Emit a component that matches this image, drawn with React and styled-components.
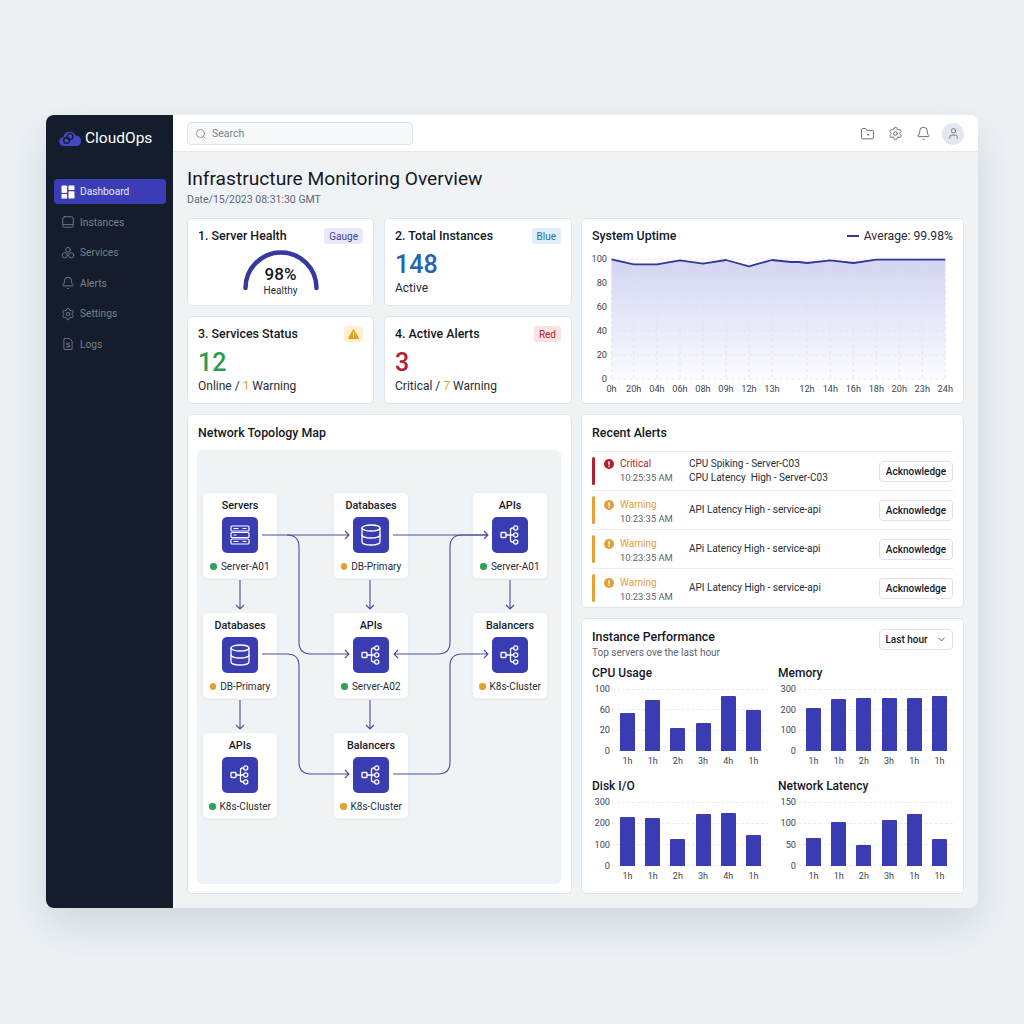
import React from 'react'
import styled, { createGlobalStyle } from 'styled-components'
import { Bell, ChevronDown, Database, Search, Settings, User } from 'lucide-react'

const GlobalStyle = createGlobalStyle`
  html, body {
    margin: 0;
    padding: 0;
    background: #edf1f4;
    font-family: Roboto, "Liberation Sans", sans-serif;
    color: #14181f;
  }
  * { box-sizing: border-box; }
`

const Page = styled.div`
  width: 1024px;
  height: 1024px;
  padding: 115px 46px 0;
`

const Shell = styled.div`
  display: flex;
  width: 932px;
  height: 793px;
  border-radius: 8px;
  overflow: hidden;
  background: #f0f3f6;
  box-shadow: 0 18px 40px rgba(40, 60, 90, 0.14);
`

const Sidebar = styled.aside`
  flex: 0 0 127px;
  background: #141d2b;
  padding: 0 7px 0 8px;
`

const Brand = styled.div`
  display: flex;
  align-items: center;
  gap: 3px;
  height: 46px;
  margin-bottom: 18px;
  padding-left: 5px;
  color: #fff;
  font-size: 15.5px;
  font-weight: 400;
`

const Nav = styled.nav`
  display: flex;
  flex-direction: column;
  gap: 5.5px;
`

const NavItem = styled.div`
  display: flex;
  align-items: center;
  gap: 5px;
  height: 25px;
  padding-left: 7px;
  border-radius: 4px;
  font-size: 10.2px;
  background: ${p => (p.$active ? '#3a3db5' : 'transparent')};
  color: ${p => (p.$active ? '#e8eaff' : '#76818f')};
  svg { flex: none; }
`

const Main = styled.div`
  flex: 1;
  display: flex;
  flex-direction: column;
  min-width: 0;
`

const Header = styled.header`
  display: flex;
  align-items: center;
  justify-content: space-between;
  height: 39px;
  padding: 1px 14px 0;
  background: #fff;
  border-bottom: 1px solid #e6eaee;
`

const SearchBox = styled.div`
  display: flex;
  align-items: center;
  gap: 5px;
  width: 226px;
  height: 23px;
  padding-left: 7px;
  background: #f6f8f9;
  border: 1px solid #e2e6ea;
  border-radius: 4px;
  color: #7b838d;
  font-size: 10.5px;
`

const HeaderIcons = styled.div`
  display: flex;
  align-items: center;
  gap: 13px;
  color: #5c6672;
`

const Avatar = styled.div`
  display: flex;
  align-items: center;
  justify-content: center;
  width: 22px;
  height: 22px;
  margin-left: -2px;
  border-radius: 50%;
  background: #e3e8ee;
`

const Content = styled.main`
  flex: 1;
  padding: 15px 14px 14px;
`

const PageTitle = styled.h1`
  margin: 0;
  font-size: 19.2px;
  line-height: 24px;
  font-weight: 450;
  color: #14181f;
`

const PageDate = styled.div`
  margin-top: 2px;
  font-size: 10.5px;
  line-height: 14px;
  color: #5d6672;
`

const DashGrid = styled.div`
  display: grid;
  grid-template-columns: 385px 383px;
  grid-template-rows: 186px 480px;
  gap: 10px 9px;
  margin-top: 11px;
`

const StatGrid = styled.div`
  display: grid;
  grid-template-columns: 187px 188px;
  grid-template-rows: 88px 88px;
  gap: 10px;
`

const Card = styled.section`
  position: relative;
  background: #fff;
  border: 1px solid #dfe5ea;
  border-radius: 5px;
  padding: 9px 10px;
  min-width: 0;
`

const PanelCard = styled(Card)`
  padding-top: 10px;
`

const CardHead = styled.div`
  display: flex;
  align-items: center;
  justify-content: space-between;
  height: 16px;
`

const CardTitle = styled.h2`
  margin: 0;
  font-size: 12.4px;
  line-height: 16px;
  font-weight: 460;
  color: #14181f;
`

const Pill = styled.span`
  display: flex;
  align-items: center;
  height: 16px;
  padding: 0 ${p => (p.$tight ? 4 : 5)}px;
  border-radius: 3px;
  font-size: 10px;
  background: ${p => p.$bg};
  color: ${p => p.$fg};
`

const StatValue = styled.div`
  margin-top: 6px;
  font-size: 25px;
  line-height: 30px;
  font-weight: 460;
  color: ${p => p.$color};
`

const StatNote = styled.div`
  margin-top: 0;
  font-size: 12px;
  line-height: 16px;
  color: #262c35;
`

const Amber = styled.span`
  color: #e3a23c;
`

const Gauge = styled.div`
  position: relative;
  width: 80px;
  height: 52px;
  margin: 5px auto 0;
`

const GaugeValue = styled.div`
  position: absolute;
  left: 0;
  right: 0;
  top: 15px;
  text-align: center;
  font-size: 17px;
  line-height: 20px;
  font-weight: 460;
`

const GaugeNote = styled.div`
  position: absolute;
  left: 0;
  right: 0;
  top: 35px;
  text-align: center;
  font-size: 10px;
  line-height: 13px;
  color: #262c35;
`

const Legend = styled.div`
  display: flex;
  align-items: center;
  gap: 5px;
  font-size: 12.2px;
  color: #262c35;
`

const LegendDash = styled.span`
  width: 12px;
  height: 2.5px;
  background: #33379c;
`

const UptimeSvg = styled.svg`
  display: block;
  margin-top: 7px;
  font-family: Roboto, "Liberation Sans", sans-serif;
  font-size: 9.2px;
  fill: #3d4550;
`

const TopologyCanvas = styled.div`
  position: relative;
  height: 434px;
  margin: 9px 0 0 -1px;
  background: #f0f3f5;
  border-radius: 5px;
`

const NodeCard = styled.div`
  position: absolute;
  left: ${p => p.$x}px;
  top: ${p => p.$y}px;
  display: flex;
  flex-direction: column;
  align-items: center;
  width: 76px;
  height: 87px;
  padding-top: 6px;
  background: #fff;
  border: 1px solid #edf0f3;
  border-radius: 5px;
  box-shadow: 0 1px 2px rgba(40, 60, 90, 0.05);
`

const NodeTitle = styled.div`
  font-size: 10.8px;
  line-height: 13px;
  font-weight: 460;
  color: #14181f;
`

const NodeIcon = styled.div`
  display: flex;
  align-items: center;
  justify-content: center;
  width: 36px;
  height: 36px;
  margin-top: 5px;
  border-radius: 5px;
  background: #3a3cb2;
  color: #fff;
`

const NodeLabel = styled.div`
  display: flex;
  align-items: center;
  gap: 4px;
  margin-top: 7px;
  font-size: 10px;
  line-height: 13px;
  color: #262c35;
  white-space: nowrap;
`

const Dot = styled.span`
  width: 6.5px;
  height: 6.5px;
  border-radius: 50%;
  background: ${p => (p.$warn ? '#e3a030' : '#2ea352')};
`

const Links = styled.svg`
  position: absolute;
  inset: 0;
  pointer-events: none;
`

const RightColumn = styled.div`
  display: grid;
  grid-template-rows: 194px 276px;
  gap: 10px;
`

const AlertList = styled.div`
  margin-top: 10px;
`

const AlertRow = styled.div`
  display: grid;
  grid-template-columns: 3px 94px 1fr auto;
  align-items: center;
  height: 39px;
  border-top: 1px solid #e8ebef;
`

const AlertBar = styled.span`
  width: 3px;
  height: 28px;
  border-radius: 2px;
  background: ${p => p.$color};
`

const Severity = styled.div`
  padding-left: 9px;
  margin-top: ${p => (p.$low ? 4 : 0)}px;
`

const SeverityHead = styled.div`
  display: flex;
  align-items: center;
  gap: 6px;
  font-size: 10px;
  line-height: 14px;
  color: ${p => p.$color};
`

const AlertTime = styled.div`
  margin-left: 16px;
  font-size: 9.4px;
  line-height: 14px;
  color: #59626d;
`

const AlertMessage = styled.div`
  font-size: 10px;
  line-height: 14px;
  color: #262c35;
  white-space: pre;
`

const OutlineButton = styled.button`
  display: flex;
  align-items: center;
  justify-content: center;
  gap: 8px;
  width: 74px;
  height: 21px;
  padding: 0;
  background: #fff;
  border: 1px solid #dfe3e8;
  border-radius: 4px;
  font-family: inherit;
  font-size: 10px;
  font-weight: 460;
  color: #14181f;
`

const PerfHead = styled.div`
  display: flex;
  align-items: flex-start;
  justify-content: space-between;
`

const PerfSub = styled.div`
  margin-top: 1px;
  font-size: 10px;
  line-height: 14px;
  color: #5d6672;
`

const ChartGrid = styled.div`
  display: grid;
  grid-template-columns: 177px 175px;
  column-gap: 9px;
  margin-top: 5px;
`

const ChartBlock = styled.div`
  height: 113px;
`

const ChartTitle = styled.div`
  font-size: 12px;
  line-height: 16px;
  font-weight: 460;
  color: #14181f;
`

const ChartBody = styled.div`
  display: flex;
  height: ${p => p.$h}px;
  margin-top: 8px;
`

const YAxis = styled.div`
  display: flex;
  flex-direction: column;
  justify-content: space-between;
  flex: 0 0 18px;
  margin-right: 2px;
  font-size: 9.2px;
  line-height: 0;
  text-align: right;
  color: #3d4550;
`

const Plot = styled.div`
  position: relative;
  flex: 1;
`

const GridLines = styled.div`
  position: absolute;
  inset: 0;
  display: flex;
  flex-direction: column;
  justify-content: space-between;
`

const GridLine = styled.span`
  height: 0;
  border-top: 1px dashed #e9ecf3;
`

const Bars = styled.div`
  position: relative;
  display: grid;
  grid-template-columns: repeat(6, 15px);
  column-gap: 10.2px;
  align-items: end;
  height: 100%;
  padding-left: 8px;
`

const Bar = styled.span`
  display: block;
  border-radius: 1px 1px 0 0;
  background: #3a3cb4;
`

const XAxis = styled.div`
  display: grid;
  grid-template-columns: repeat(6, 15px);
  column-gap: 10.2px;
  margin: 4px 0 0 28px;
  font-size: 9px;
  line-height: 12px;
  text-align: center;
  color: #3d4550;
`

const CloudLogo = () => (
  <svg width="23" height="17" viewBox="0 0 23 17">
    <path d="M5 16a4.5 4.5 0 0 1-.6-9A6.5 6.5 0 0 1 16.6 5.4 5.4 5.4 0 0 1 18 16z" fill="#4548c4" />
    <g fill="none" stroke="#141d2b" strokeWidth="1.3">
      <circle cx="7.6" cy="10.4" r="2.9" />
      <circle cx="11" cy="6.6" r="2.9" />
    </g>
  </svg>
)

const DashIcon = () => (
  <svg width="14" height="14" viewBox="0 0 14 14" fill="#fff">
    <rect x="0.5" y="0.5" width="5.6" height="7.4" rx="0.6" />
    <rect x="7.5" y="0.5" width="6" height="4.6" rx="0.6" />
    <rect x="0.5" y="9.1" width="5.6" height="4.4" rx="0.6" />
    <rect x="7.5" y="6.3" width="6" height="7.2" rx="0.6" />
  </svg>
)

const line = { fill: 'none', stroke: 'currentColor', strokeLinecap: 'round', strokeLinejoin: 'round' }

const InstancesIcon = () => (
  <svg width="14" height="14" viewBox="0 0 24 24" {...line} strokeWidth="1.5">
    <rect x="3" y="3" width="18" height="18" rx="3" />
    <path d="M3 16.5h18" />
  </svg>
)

const ServicesIcon = () => (
  <svg width="14" height="14" viewBox="0 0 24 24" {...line} strokeWidth="1.5">
    <circle cx="12" cy="6.5" r="4" />
    <circle cx="6.5" cy="16" r="4.5" />
    <circle cx="17.5" cy="16" r="4.5" />
  </svg>
)

const LogsIcon = () => (
  <svg width="14" height="14" viewBox="0 0 24 24" {...line} strokeWidth="1.5">
    <path d="M6 2.5h8.5L19 7v13a1.5 1.5 0 0 1-1.5 1.5h-11A1.5 1.5 0 0 1 5 20V4a1.5 1.5 0 0 1 1-1.5z" />
    <path d="M14.5 10.5h-4.5v3h4.5v3.5H9.5" />
  </svg>
)

const FolderIcon = () => (
  <svg width="15" height="15" viewBox="0 0 24 24" {...line} strokeWidth="1.5">
    <path d="M2.5 5.5A1.5 1.5 0 0 1 4 4h5l2 3h9a1.5 1.5 0 0 1 1.5 1.5V19a1.5 1.5 0 0 1-1.5 1.5H4A1.5 1.5 0 0 1 2.5 19z" />
    <circle cx="13" cy="14" r="0.8" />
  </svg>
)

const ServerIcon = () => (
  <svg width="24" height="24" viewBox="0 0 24 24" {...line} strokeWidth="1.2">
    <rect x="3" y="3" width="18" height="5" rx="1" />
    <rect x="3" y="9.5" width="18" height="5" rx="1" />
    <rect x="3" y="16" width="18" height="5" rx="1" />
    <path d="M6 5.5h4M15 5.5h3M6 12h2M6 18.5h4M15 18.5h3" />
  </svg>
)

const NetworkIcon = () => (
  <svg width="24" height="24" viewBox="0 0 24 24" {...line} strokeWidth="1.3">
    <rect x="3" y="9.5" width="5" height="5" rx="0.8" />
    <path d="M8 12h7.5M15.5 5h-1a2 2 0 0 0-2 2v10a2 2 0 0 0 2 2h1" />
    <circle cx="17.7" cy="5" r="2.1" />
    <circle cx="17.7" cy="12" r="2.1" />
    <circle cx="17.7" cy="19" r="2.1" />
  </svg>
)

const AlertDot = ({ color }) => (
  <svg width="10" height="10" viewBox="0 0 10 10">
    <circle cx="5" cy="5" r="5" fill={color} />
    <rect x="4.3" y="2.2" width="1.4" height="3.6" rx="0.6" fill="#fff" />
    <circle cx="5" cy="7.2" r="0.8" fill="#fff" />
  </svg>
)

const WarnTriangle = () => (
  <svg width="11" height="10" viewBox="0 0 11 10">
    <path d="M5.5 0.5 10.6 9.5H0.4z" fill="#e2a11f" stroke="#e2a11f" strokeLinejoin="round" />
    <rect x="5" y="3.2" width="1" height="3.2" fill="#fff" />
    <rect x="5" y="7.1" width="1" height="1" fill="#fff" />
  </svg>
)

const navItems = [
  { label: 'Dashboard', icon: <DashIcon />, active: true },
  { label: 'Instances', icon: <InstancesIcon /> },
  { label: 'Services', icon: <ServicesIcon /> },
  { label: 'Alerts', icon: <Bell size={14} strokeWidth={1.5} /> },
  { label: 'Settings', icon: <Settings size={14} strokeWidth={1.5} /> },
  { label: 'Logs', icon: <LogsIcon /> }
]

const nodes = [
  { x: 5, y: 42, title: 'Servers', icon: 'server', label: 'Server-A01' },
  { x: 136, y: 42, title: 'Databases', icon: 'db', label: 'DB-Primary', warn: true },
  { x: 275, y: 42, title: 'APIs', icon: 'net', label: 'Server-A01' },
  { x: 5, y: 162, title: 'Databases', icon: 'db', label: 'DB-Primary', warn: true },
  { x: 136, y: 162, title: 'APIs', icon: 'net', label: 'Server-A02' },
  { x: 275, y: 162, title: 'Balancers', icon: 'net', label: 'K8s-Cluster', warn: true },
  { x: 5, y: 282, title: 'APIs', icon: 'net', label: 'K8s-Cluster' },
  { x: 136, y: 282, title: 'Balancers', icon: 'net', label: 'K8s-Cluster', warn: true }
]

const nodeIcons = {
  server: <ServerIcon />,
  db: <Database size={24} strokeWidth={1.3} />,
  net: <NetworkIcon />
}

const linkPaths = [
  'M65 85H152M148 81l4 4-4 4',
  'M90 85Q102 85 102 97V192Q102 204 114 204H152M148 200l4 4-4 4',
  'M196 85H291M287 81l4 4-4 4',
  'M291 85H265Q253 85 253 97V192Q253 204 241 204H197M201 200l-4 4 4 4',
  'M196 324H241Q253 324 253 312V216Q253 204 265 204H291M287 200l4 4-4 4',
  'M65 204H90Q102 204 102 216V312Q102 324 114 324H152M148 320l4 4-4 4',
  'M43 130V159M39 155l4 4 4-4',
  'M173 130V159M169 155l4 4 4-4',
  'M313 130V159M309 155l4 4 4-4',
  'M43 250V279M39 275l4 4 4-4',
  'M173 250V279M169 275l4 4 4-4'
]

const uptimeLabels = [
  ['0h', 611.5], ['20h', 633.7], ['04h', 657], ['06h', 680], ['08h', 703], ['09h', 726], ['12h', 749], ['13h', 772],
  ['12h', 807], ['14h', 830.4], ['16h', 853.4], ['18h', 876.4], ['20h', 899.3], ['23h', 922.3], ['24h', 945.3]
]

const uptimePoints = [
  [611.5, 258.3], [633.7, 263.3], [657, 263.3], [680, 259.3], [703, 262.7], [726, 259], [749, 265.3], [772, 259],
  [791, 261], [799, 261], [807, 262], [830.4, 259.3], [853.4, 262], [876.4, 258.7], [945.3, 258.7]
]

const uptimeLine = uptimePoints.map(([x, y]) => `${x - 592},${y - 250}`).join(' ')
const uptimeArea = `19.5,128 ${uptimeLine} 353.3,128`

const UptimeChart = () => (
  <UptimeSvg width="361" height="148" viewBox="0 0 361 148">
    <defs>
      <linearGradient id="uptimeFill" x1="0" y1="0" x2="0" y2="1">
        <stop offset="0" stopColor="#d3d5f2" />
        <stop offset="1" stopColor="#fbfbff" />
      </linearGradient>
    </defs>
    <polygon points={uptimeArea} fill="url(#uptimeFill)" />
    {[8, 32, 56, 80, 104, 128].map(y => (
      <line key={y} x1="19.5" x2="353.3" y1={y} y2={y} stroke="#dfe1ec" strokeWidth="0.8" strokeDasharray="3 3" />
    ))}
    {uptimeLabels.map(([, x], i) => (
      <line key={i} x1={x - 592} x2={x - 592} y1="10" y2="128" stroke="#dfe1ec" strokeWidth="0.8" strokeDasharray="3 3" />
    ))}
    <polyline points={uptimeLine} fill="none" stroke="#33379c" strokeWidth="1.8" strokeLinejoin="round" />
    {[100, 80, 60, 40, 20, 0].map((v, i) => (
      <text key={v} x="15" y={11 + i * 24} textAnchor="end">{v}</text>
    ))}
    {uptimeLabels.map(([label, x], i) => (
      <text key={i} x={x - 592} y="141" textAnchor="middle">{label}</text>
    ))}
  </UptimeSvg>
)

const alerts = [
  { level: 'Critical', color: '#b3202e', barColor: '#b3202e', time: '10:25:35 AM', lines: ['CPU Spiking - Server-C03', 'CPU Latency  High - Server-C03'] },
  { level: 'Warning', color: '#e2a03a', barColor: '#e89f35', time: '10:23:35 AM', lines: ['API Latency High - service-api'], low: true },
  { level: 'Warning', color: '#e2a03a', barColor: '#e89f35', time: '10:23:35 AM', lines: ['APi Latency High - service-api'], low: true },
  { level: 'Warning', color: '#e2a03a', barColor: '#e89f35', time: '10:23:35 AM', lines: ['API Latency High - service-api'], low: true }
]

const charts = [
  { title: 'CPU Usage', h: 62, y: [100, 60, 20, 0], bars: [38, 51, 23, 28, 55, 41], x: ['1h', '1h', '2h', '3h', '4h', '1h'] },
  { title: 'Memory', h: 62, y: [300, 200, 100, 0], bars: [43, 52, 53, 53, 53, 55], x: ['1h', '1h', '2h', '3h', '1h', '1h'] },
  { title: 'Disk I/O', h: 64, y: [300, 200, 100, 0], bars: [49, 48, 27, 52, 53, 31], x: ['1h', '1h', '2h', '3h', '4h', '1h'] },
  { title: 'Network Latency', h: 64, y: [150, 100, 50, 0], bars: [28, 44, 21, 46, 52, 27], x: ['1h', '1h', '2h', '3h', '1h', '1h'] }
]

const BarChart = ({ title, h, y, bars, x }) => (
  <ChartBlock>
    <ChartTitle>{title}</ChartTitle>
    <ChartBody $h={h}>
      <YAxis>
        {y.map(v => <span key={v}>{v}</span>)}
      </YAxis>
      <Plot>
        <GridLines>
          {y.map(v => <GridLine key={v} />)}
        </GridLines>
        <Bars>
          {bars.map((b, i) => <Bar key={i} style={{ height: b }} />)}
        </Bars>
      </Plot>
    </ChartBody>
    <XAxis>
      {x.map((label, i) => <span key={i}>{label}</span>)}
    </XAxis>
  </ChartBlock>
)

export default function App() {
  return (
    <Page>
      <GlobalStyle />
      <Shell>
        <Sidebar>
          <Brand>
            <CloudLogo />
            CloudOps
          </Brand>
          <Nav>
            {navItems.map(item => (
              <NavItem key={item.label} $active={item.active}>
                {item.icon}
                {item.label}
              </NavItem>
            ))}
          </Nav>
        </Sidebar>
        <Main>
          <Header>
            <SearchBox>
              <Search size={12} strokeWidth={1.6} />
              Search
            </SearchBox>
            <HeaderIcons>
              <FolderIcon />
              <Settings size={15} strokeWidth={1.5} />
              <Bell size={15} strokeWidth={1.5} />
              <Avatar>
                <User size={13} strokeWidth={1.5} />
              </Avatar>
            </HeaderIcons>
          </Header>
          <Content>
            <PageTitle>Infrastructure Monitoring Overview</PageTitle>
            <PageDate>Date/15/2023 08:31:30 GMT</PageDate>
            <DashGrid>
              <StatGrid>
                <Card>
                  <CardHead>
                    <CardTitle>1. Server Health</CardTitle>
                    <Pill $bg="#e8e9f8" $fg="#3d4199">Gauge</Pill>
                  </CardHead>
                  <Gauge>
                    <svg width="80" height="52" viewBox="0 0 80 52">
                      <path d="M4.5 39A35.5 35.5 0 0 1 75.5 39" fill="none" stroke="#3539a0" strokeWidth="4.5" strokeLinecap="round" />
                    </svg>
                    <GaugeValue>98%</GaugeValue>
                    <GaugeNote>Healthy</GaugeNote>
                  </Gauge>
                </Card>
                <Card>
                  <CardHead>
                    <CardTitle>2. Total Instances</CardTitle>
                    <Pill $bg="#e0f0fa" $fg="#2a6db0">Blue</Pill>
                  </CardHead>
                  <StatValue $color="#2465ad">148</StatValue>
                  <StatNote>Active</StatNote>
                </Card>
                <Card>
                  <CardHead>
                    <CardTitle>3. Services Status</CardTitle>
                    <Pill $tight $bg="#fdf1d2" $fg="#e2a11f"><WarnTriangle /></Pill>
                  </CardHead>
                  <StatValue $color="#2f9a55">12</StatValue>
                  <StatNote>Online / <Amber>1</Amber> Warning</StatNote>
                </Card>
                <Card>
                  <CardHead>
                    <CardTitle>4. Active Alerts</CardTitle>
                    <Pill $bg="#fbe3e3" $fg="#b3202e">Red</Pill>
                  </CardHead>
                  <StatValue $color="#b3202e">3</StatValue>
                  <StatNote>Critical / <Amber>7</Amber> Warning</StatNote>
                </Card>
              </StatGrid>
              <Card>
                <CardHead>
                  <CardTitle>System Uptime</CardTitle>
                  <Legend>
                    <LegendDash />
                    Average: 99.98%
                  </Legend>
                </CardHead>
                <UptimeChart />
              </Card>
              <PanelCard>
                <CardHead>
                  <CardTitle>Network Topology Map</CardTitle>
                </CardHead>
                <TopologyCanvas>
                  {nodes.map((n, i) => (
                    <NodeCard key={i} $x={n.x} $y={n.y}>
                      <NodeTitle>{n.title}</NodeTitle>
                      <NodeIcon>{nodeIcons[n.icon]}</NodeIcon>
                      <NodeLabel>
                        <Dot $warn={n.warn} />
                        {n.label}
                      </NodeLabel>
                    </NodeCard>
                  ))}
                  <Links width="364" height="434" viewBox="0 0 364 434" fill="none" stroke="#4a4f9e" strokeWidth="1.1">
                    {linkPaths.map(d => <path key={d} d={d} />)}
                  </Links>
                </TopologyCanvas>
              </PanelCard>
              <RightColumn>
                <PanelCard>
                  <CardHead>
                    <CardTitle>Recent Alerts</CardTitle>
                  </CardHead>
                  <AlertList>
                    {alerts.map((a, i) => (
                      <AlertRow key={i}>
                        <AlertBar $color={a.barColor} />
                        <Severity $low={a.low}>
                          <SeverityHead $color={a.color}>
                            <AlertDot color={a.color} />
                            {a.level}
                          </SeverityHead>
                          <AlertTime>{a.time}</AlertTime>
                        </Severity>
                        <AlertMessage>
                          {a.lines.map(t => <div key={t}>{t}</div>)}
                        </AlertMessage>
                        <OutlineButton>Acknowledge</OutlineButton>
                      </AlertRow>
                    ))}
                  </AlertList>
                </PanelCard>
                <PanelCard>
                  <PerfHead>
                    <div>
                      <CardTitle>Instance Performance</CardTitle>
                      <PerfSub>Top servers ove the last hour</PerfSub>
                    </div>
                    <OutlineButton>
                      Last hour
                      <ChevronDown size={11} strokeWidth={1.5} />
                    </OutlineButton>
                  </PerfHead>
                  <ChartGrid>
                    {charts.map(c => <BarChart key={c.title} {...c} />)}
                  </ChartGrid>
                </PanelCard>
              </RightColumn>
            </DashGrid>
          </Content>
        </Main>
      </Shell>
    </Page>
  )
}
